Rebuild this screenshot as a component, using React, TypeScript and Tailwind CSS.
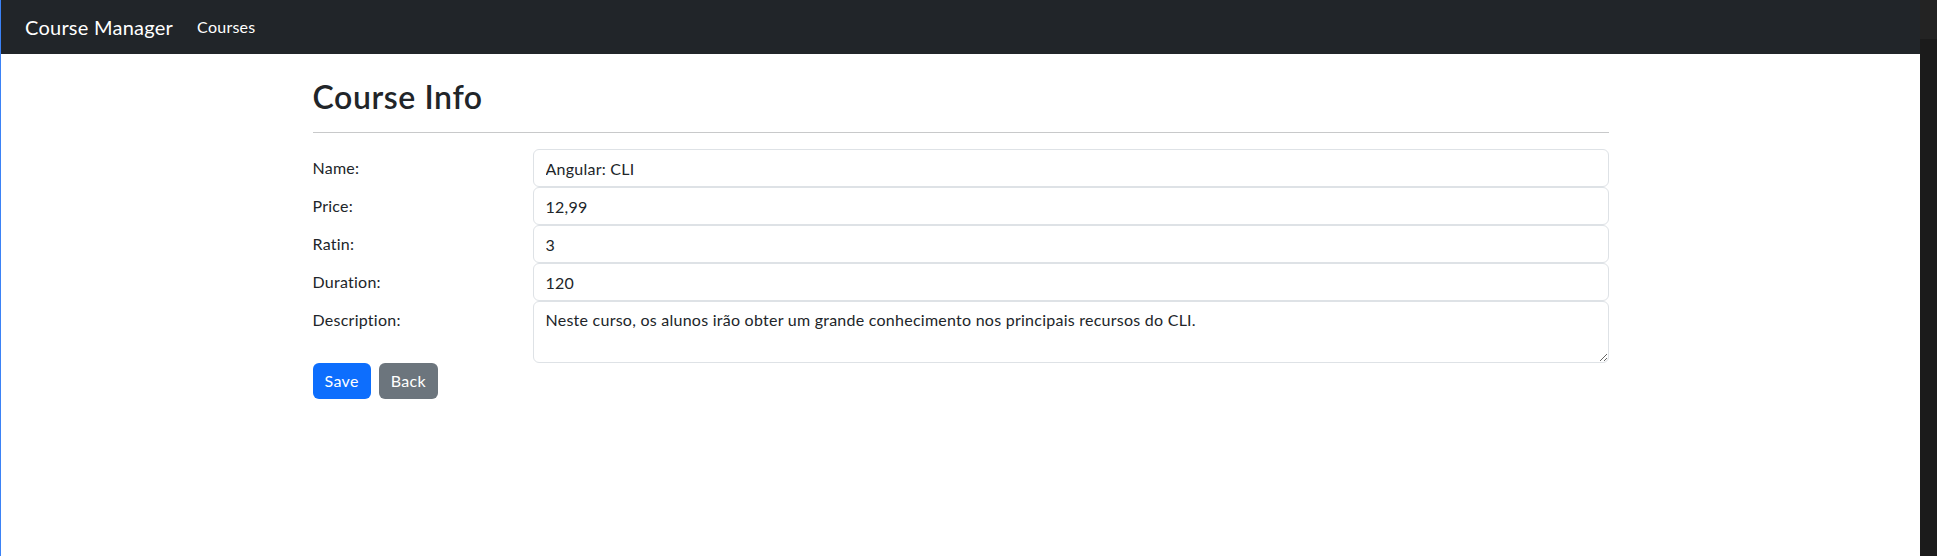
import React from 'react';

const fields = [
  { label: 'Name:', value: 'Angular: CLI' },
  { label: 'Price:', value: '12,99' },
  { label: 'Ratin:', value: '3' },
  { label: 'Duration:', value: '120' },
];

export default function App() {
  return (
    <div className="flex h-[556px] w-full overflow-hidden bg-white text-[#212529] font-['Lato',sans-serif] tracking-[0.25px]">
      <div className="flex w-[1920px] shrink-0 flex-col border-l border-[#3b82f6]">
        {/* Navbar */}
        <nav className="flex h-[54px] items-center bg-[#212529] pl-6">
          <a className="mr-4 text-[20px] leading-[30px] text-white">Course Manager</a>
          <a className="px-2 text-[16px] leading-6 text-white">Courses</a>
        </nav>

        <main className="mx-auto w-full max-w-[1320px] px-3">
          <h2 className="mt-6 mb-2 text-[32px] font-semibold leading-[1.2] tracking-[0.6px]">Course Info</h2>
          <hr className="my-4 border-t border-[#c8c9ca]" />

          <form className="grid grid-cols-[196px_1fr] gap-x-6">
            {fields.map((f) => (
              <React.Fragment key={f.label}>
                <label className="py-[7px] text-[16px] leading-6">{f.label}</label>
                <input
                  defaultValue={f.value}
                  className="h-[38px] w-full rounded-md border border-[#dee2e6] bg-white px-3 py-1.5 text-[16px] leading-6 tracking-[0.25px] text-[#212529] outline-none"
                />
              </React.Fragment>
            ))}
            <label className="py-[7px] text-[16px] leading-6">Description:</label>
            <textarea
              rows={2}
              defaultValue="Neste curso, os alunos irão obter um grande conhecimento nos principais recursos do CLI."
              className="block h-[62px] w-full rounded-md border border-[#dee2e6] bg-white px-3 py-1.5 text-[16px] leading-6 tracking-[0.25px] text-[#212529] outline-none"
            />
          </form>

          <div className="flex gap-2">
            <button className="rounded-md bg-[#0d6efd] px-3 py-1.5 text-[16px] leading-6 tracking-[0.35px] text-white">Save</button>
            <button className="rounded-md bg-[#6c757d] px-3 py-1.5 text-[16px] leading-6 tracking-[0.35px] text-white">Back</button>
          </div>
        </main>
      </div>

      {/* scrollbar */}
      <div className="flex w-[17px] shrink-0 flex-col bg-[#1b1b1b]">
        <div className="h-[39px] bg-[#232323]" />
      </div>
    </div>
  );
}
